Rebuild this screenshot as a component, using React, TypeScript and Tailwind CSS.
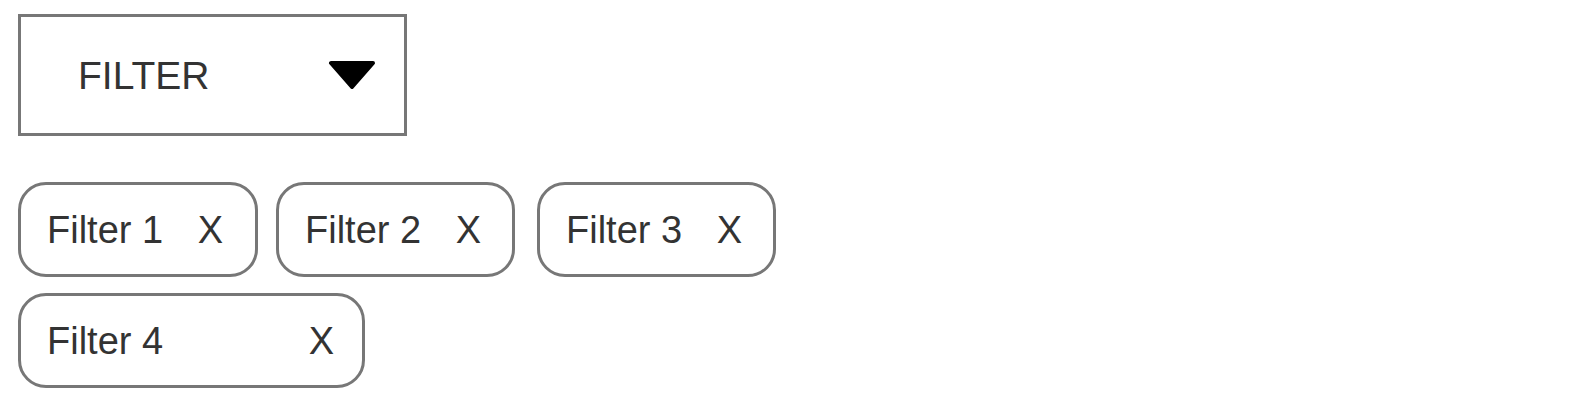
import React from 'react';

type Chip = { label: string; cls: string };

const chips: Chip[] = [
  { label: 'Filter 1', cls: 'w-[240px] pr-[32px]' },
  { label: 'Filter 2', cls: 'w-[239px] pr-[31px] ml-[18px]' },
  { label: 'Filter 3', cls: 'w-[239px] pr-[31px] ml-[22px]' },
  { label: 'Filter 4', cls: 'w-[347px] pr-[28px]' },
];

const App: React.FC = () => {
  return (
    <div
      className="min-h-screen bg-white pt-[14px] pl-[18px] text-[#333]"
      style={{ fontFamily: '"Liberation Sans", Arial, sans-serif' }}
    >
      {/* dropdown */}
      <div className="w-[389px] h-[122px] border-[3px] border-[#777] flex items-center justify-between pl-[57px] pr-[28px]">
        <span className="text-[39px] leading-none">FILTER</span>
        <svg width="48" height="28" viewBox="0 0 48 28">
          <path d="M3 2 H45 L24 26 Z" fill="#000" stroke="#000" strokeWidth="4" strokeLinejoin="round" />
        </svg>
      </div>

      {/* active filters */}
      <div className="mt-[46px] flex flex-wrap gap-y-[16px] w-[780px]">
        {chips.map((chip) => (
          <div
            key={chip.label}
            className={`${chip.cls} h-[95px] border-[3px] border-[#777] rounded-[28px] flex items-center justify-between pl-[26px]`}
          >
            <span className="text-[38px] leading-none">{chip.label}</span>
            <span className="text-[38px] leading-none">X</span>
          </div>
        ))}
      </div>
    </div>
  );
};

export default App;
